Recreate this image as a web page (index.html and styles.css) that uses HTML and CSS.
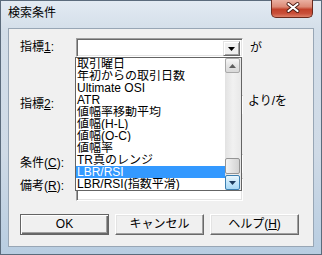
FILE: index.html
```html
<!DOCTYPE html>
<html lang="ja">
<head>
    <meta charset="UTF-8">
    <title>検索条件</title>
    <link rel="stylesheet" href="styles.css">
</head>
<body>
    <div class="window">
        <div class="titlebar">
            <span class="title">検索条件</span>
            <span class="close">
                <svg width="42" height="18" viewBox="0 0 42 18">
                    <path d="M16.5 5 L25.5 12 M25.5 5 L16.5 12" stroke="#4a1a12" stroke-width="4" stroke-linecap="round"/>
                    <path d="M16.5 5 L25.5 12 M25.5 5 L16.5 12" stroke="#ffffff" stroke-width="2.2" stroke-linecap="round"/>
                </svg>
            </span>
        </div>

        <div class="client">
            <div class="row row-1">
                <label class="lbl">指標<u>1</u>:</label>
                <div class="combo">
                    <span class="field"></span>
                    <span class="drop">
                        <svg width="7" height="4" viewBox="0 0 7 4"><path d="M0 0 H7 L3.5 4 Z" fill="#000"/></svg>
                    </span>
                </div>
                <span class="suffix">が</span>
            </div>

            <div class="row row-2">
                <label class="lbl">指標<u>2</u>:</label>
                <div class="combo"><span class="field"></span></div>
                <span class="suffix suffix-2">より/を</span>
            </div>

            <div class="row row-3">
                <label class="lbl">条件(<u>C</u>):</label>
                <div class="combo"><span class="field"></span></div>
            </div>

            <div class="row row-4">
                <label class="lbl">備考(<u>R</u>):</label>
                <div class="edit"></div>
            </div>

            <div class="buttons">
                <button class="btn btn-default">OK</button>
                <button class="btn">キャンセル</button>
                <button class="btn">ヘルプ(<u>H</u>)</button>
            </div>

            <!-- dropdown of 指標1, open over the rows below -->
            <div class="listbox">
                <ul class="items">
                    <li>取引曜日</li>
                    <li>年初からの取引日数</li>
                    <li>Ultimate OSI</li>
                    <li>ATR</li>
                    <li>値幅率移動平均</li>
                    <li>値幅(H-L)</li>
                    <li>値幅(O-C)</li>
                    <li>値幅率</li>
                    <li>TR真のレンジ</li>
                    <li class="selected">LBR/RSI</li>
                    <li>LBR/RSI(指数平滑)</li>
                </ul>
                <div class="scrollbar">
                    <span class="sb-btn">
                        <svg width="7" height="4" viewBox="0 0 7 4"><path d="M0 4 H7 L3.5 0 Z" fill="#5e5e5e"/></svg>
                    </span>
                    <div class="track">
                        <span class="thumb"></span>
                    </div>
                    <span class="sb-btn sb-hot">
                        <svg width="7" height="4" viewBox="0 0 7 4"><path d="M0 0 H7 L3.5 4 Z" fill="#1c3b5e"/></svg>
                    </span>
                </div>
            </div>
        </div>
    </div>
</body>
</html>
```

FILE: styles.css
```css
body {
    margin: 0;
    font-family: "Liberation Sans", "Noto Sans CJK JP", sans-serif;
    font-size: 12px;
    color: #000;
}

.window {
    width: 322px;
    height: 255px;
    box-sizing: border-box;
    display: flex;
    flex-direction: column;
    padding: 0 7px 7px 7px;
    border: 1px solid #5b6b7c;
    background: linear-gradient(to bottom, #e2eaf2 0%, #d3dee9 12%, #cfdae6 60%, #b8cde1 100%);
}

.titlebar {
    height: 27px;
    display: flex;
    justify-content: space-between;
    flex-shrink: 0;
}

.title {
    padding-top: 6px;
    line-height: 12px;
    height: 12px;
}

.close {
    width: 42px;
    height: 18px;
    margin-top: -1px;
    margin-right: 1px;
    box-sizing: border-box;
    border: 1px solid #6b2a1d;
    border-top: none;
    border-radius: 0 0 5px 5px;
    background: linear-gradient(to bottom, #eab0a2 0%, #dc8a76 40%, #c2412a 55%, #c9503a 80%, #dd8068 100%);
    overflow: hidden;
}

.close svg {
    display: block;
    margin-top: -1px;
}

.client {
    flex: 1;
    position: relative;
    display: flex;
    flex-direction: column;
    background: #f0f0f0;
    border: 1px solid #98a6b5;
    padding: 9px 0 0 11px;
}

.row {
    display: flex;
    align-items: center;
    height: 19px;
}

.row-2 { margin-top: 38px; }
.row-3 { margin-top: 40px; }

.row-4 {
    margin-top: 5px;
    height: 23px;
    align-items: flex-start;
}

.lbl {
    width: 56px;
    line-height: 17px;
    white-space: nowrap;
}

.combo {
    width: 167px;
    height: 19px;
    box-sizing: border-box;
    display: flex;
    justify-content: flex-end;
    padding: 2px;
    background: #fff;
    border: 1px solid;
    border-color: #a0a0a0 #fff #fff #a0a0a0;
    box-shadow: inset 1px 1px 0 #696969, inset -1px -1px 0 #e3e3e3;
}

.drop {
    width: 17px;
    height: 15px;
    box-sizing: border-box;
    display: flex;
    align-items: center;
    justify-content: center;
    background: #f0f0f0;
    border: 1px solid;
    border-color: #e3e3e3 #696969 #696969 #e3e3e3;
    box-shadow: inset 1px 1px 0 #fff, inset -1px -1px 0 #a0a0a0;
}

.suffix {
    margin-left: 7px;
    line-height: 12px;
}

.suffix-2 {
    margin-left: 5px;
    align-self: flex-start;
}

.edit {
    width: 167px;
    height: 23px;
    box-sizing: border-box;
    background: #fff;
    border: 1px solid;
    border-color: #a0a0a0 #fff #fff #a0a0a0;
    box-shadow: inset 1px 1px 0 #696969, inset -1px -1px 0 #e3e3e3;
}

.buttons {
    display: flex;
    gap: 6px;
    margin-top: 13px;
}

.btn {
    width: 89px;
    height: 21px;
    box-sizing: border-box;
    padding: 0;
    font-family: inherit;
    font-size: 12px;
    line-height: 17px;
    color: #000;
    background: #f0f0f0;
    border: 1px solid;
    border-color: #fff #696969 #696969 #fff;
    box-shadow: inset -1px -1px 0 #a0a0a0, inset 1px 1px 0 #e3e3e3;
}

.btn-default {
    border-color: #646464;
    box-shadow: inset 1px 1px 0 #fff, inset -1px -1px 0 #696969, inset -2px -2px 0 #a0a0a0;
}

/* open dropdown list */
.listbox {
    position: absolute;
    top: 28px;
    left: 66px;
    width: 167px;
    height: 134px;
    box-sizing: border-box;
    display: flex;
    background: #fff;
    border: 1px solid #646464;
}

.items {
    flex: 1;
    list-style: none;
    margin: 0;
    padding: 0;
    overflow: hidden;
}

.items li {
    height: 12px;
    line-height: 12px;
    padding-left: 1px;
    white-space: nowrap;
    overflow: hidden;
}

.items li.selected {
    background: #3399ff;
    color: #fff;
}

.scrollbar {
    width: 16px;
    display: flex;
    flex-direction: column;
    background: linear-gradient(to right, #e2e2e2, #f1f1f1 50%, #e8e8e8);
}

.sb-btn {
    height: 15px;
    box-sizing: border-box;
    margin: 0 1px 0 0;
    display: flex;
    align-items: center;
    justify-content: center;
    border: 1px solid #a9a9a9;
    border-radius: 2px;
    background: linear-gradient(to bottom, #f7f7f7, #e4e4e4 50%, #d9d9d9);
}

.sb-hot {
    border-color: #3c7fb1;
    background: linear-gradient(to bottom, #e9f6fd, #c4e6fa 50%, #a8d8f5);
}

.track {
    flex: 1;
    display: flex;
    flex-direction: column;
    justify-content: flex-end;
    padding-bottom: 1px;
}

.thumb {
    height: 16px;
    box-sizing: border-box;
    margin-right: 1px;
    border: 1px solid #959595;
    border-radius: 2px;
    background: linear-gradient(to right, #f4f4f4, #e2e2e2 50%, #d3d3d3);
}
```
